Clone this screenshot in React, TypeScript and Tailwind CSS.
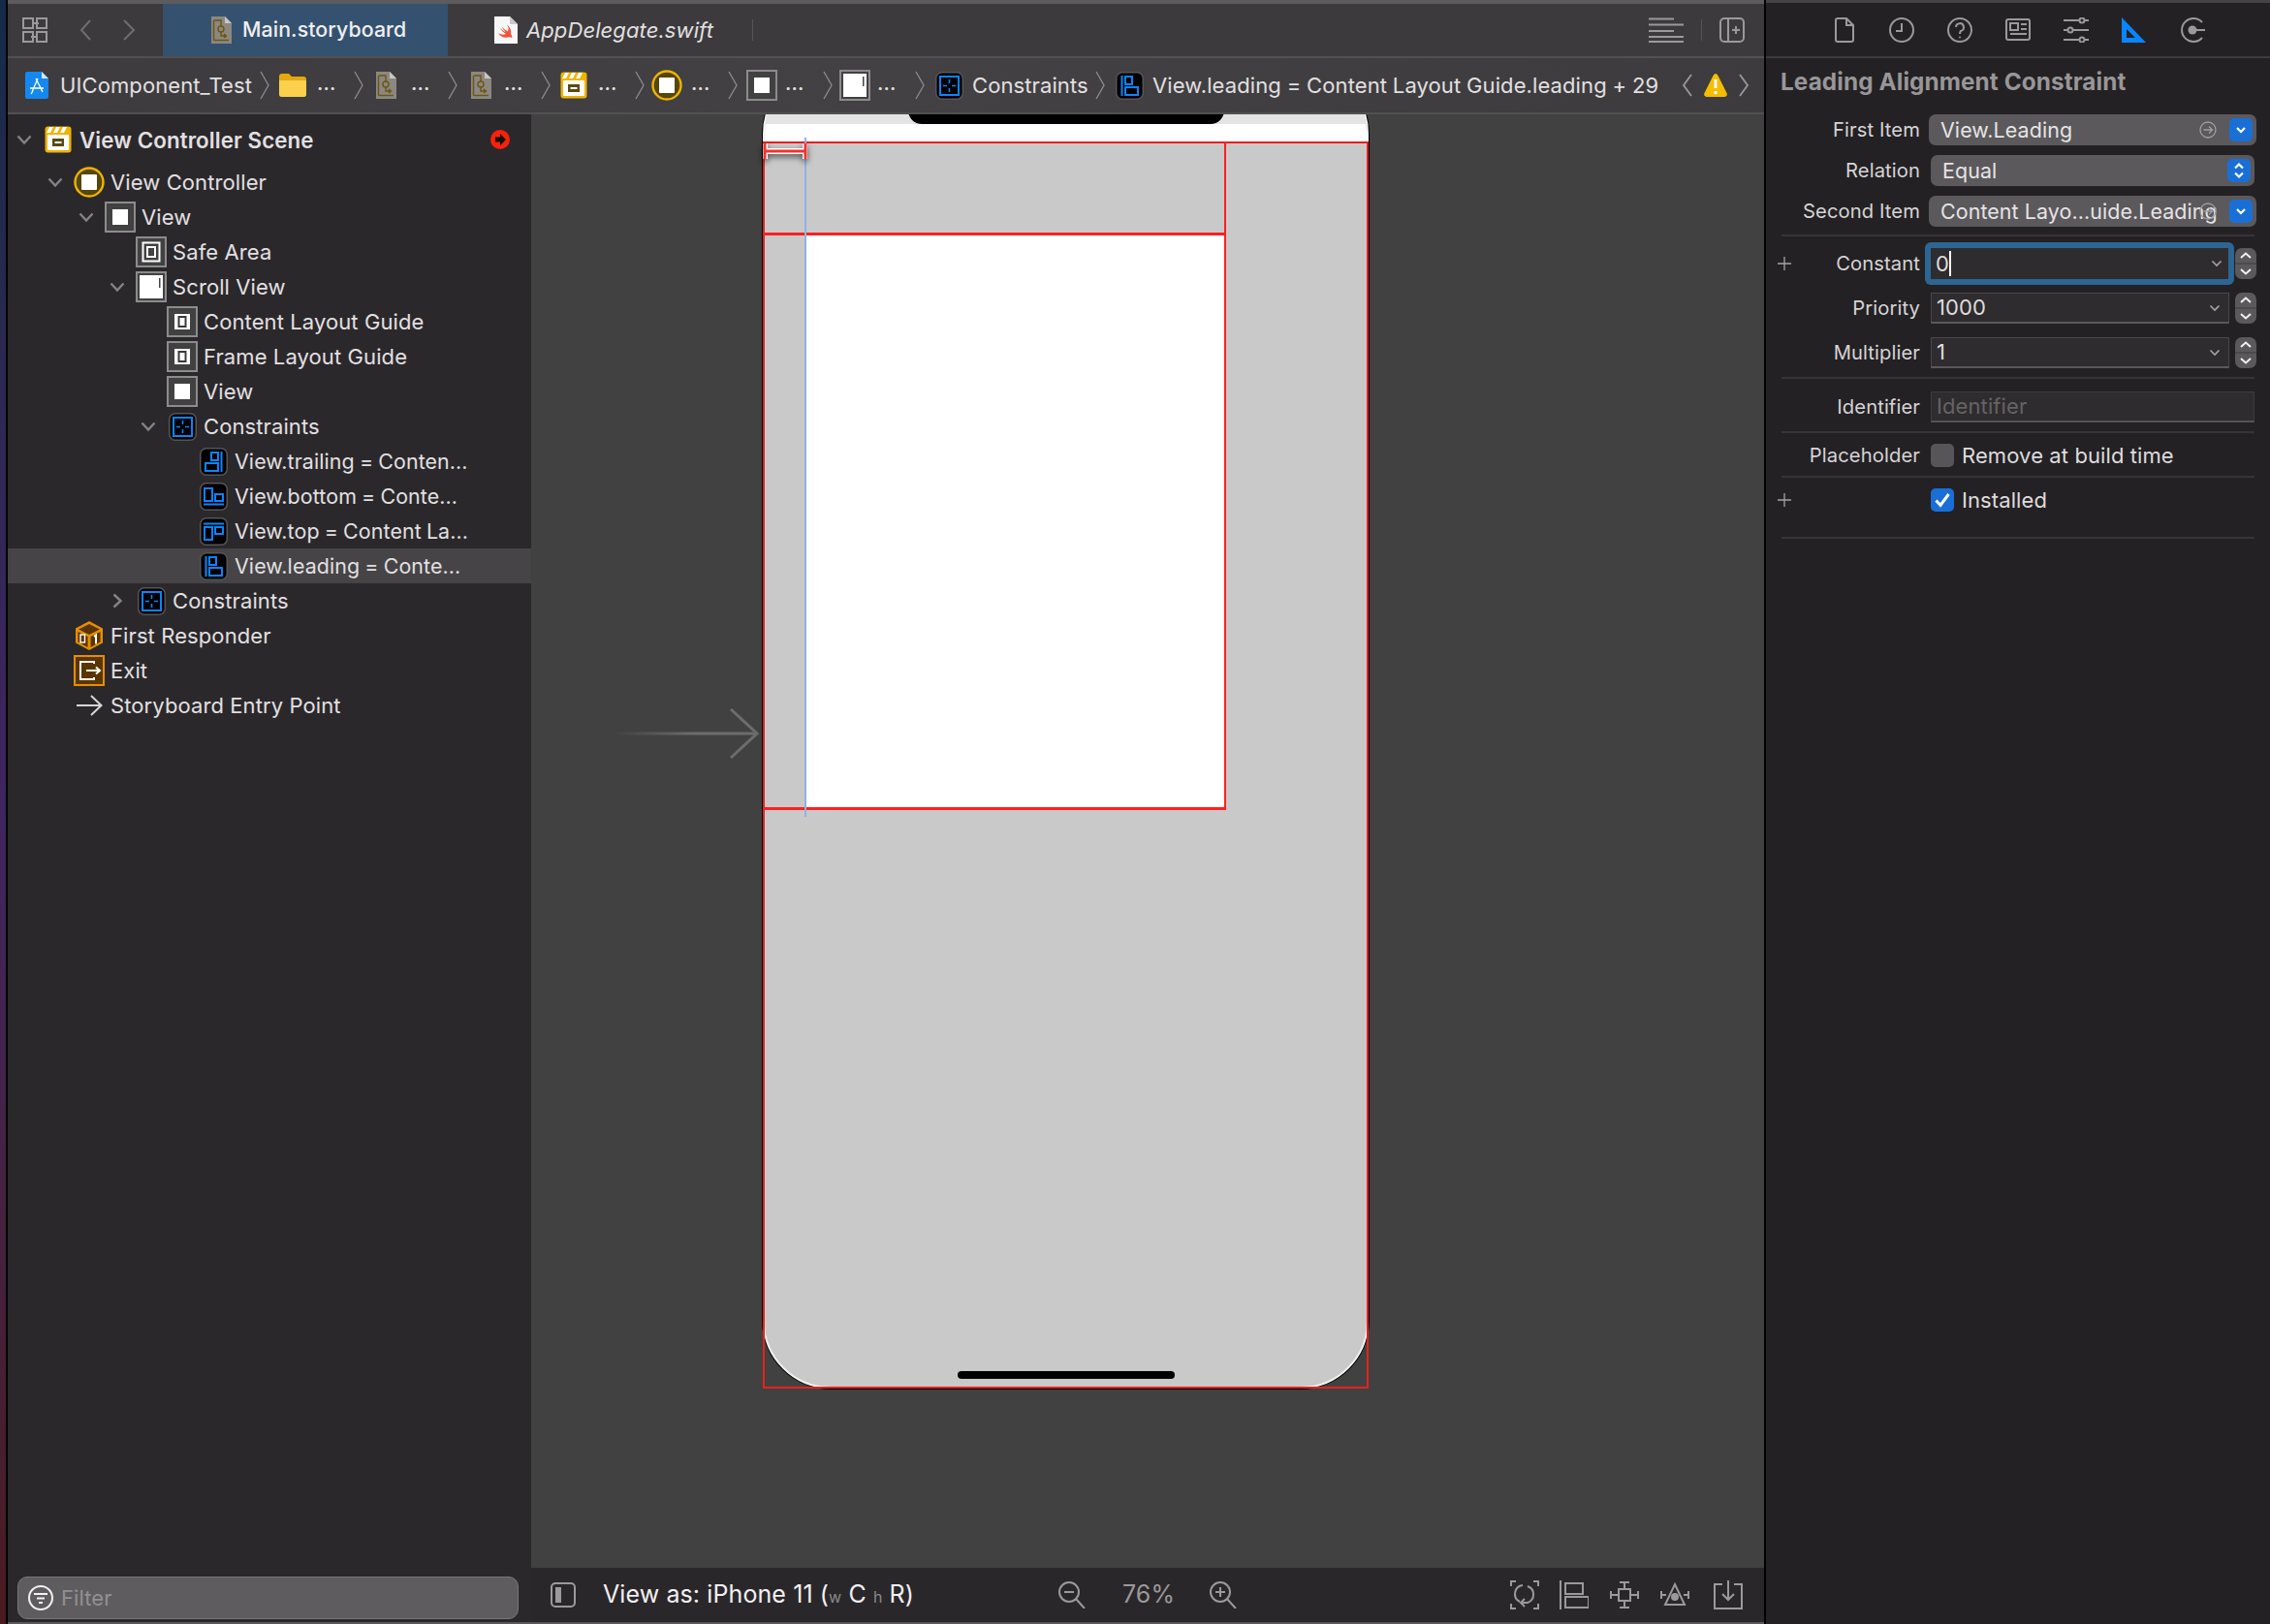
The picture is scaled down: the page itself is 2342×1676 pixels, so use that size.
import React from "react";

const Chev = ({ open = true }: { open?: boolean }) => (
  <svg width="16" height="16" viewBox="0 0 16 16" fill="none" stroke="#858385" strokeWidth="2.4">
    {open ? <path d="M1.5 4.5 L8 11.5 L14.5 4.5" /> : <path d="M4.5 1.5 L11.5 8 L4.5 14.5" />}
  </svg>
);

const Sep = () => (
  <svg width="10" height="30" viewBox="0 0 10 30" fill="none" stroke="#8e8c8e" strokeWidth="1.3" className="shrink-0">
    <path d="M1 1 L9 15 L1 29" />
  </svg>
);

const Scene = ({ s = 28 }: { s?: number }) => (
  <svg width={s} height={s} viewBox="0 0 28 28">
    <rect x="0.5" y="0.5" width="27" height="27" rx="3" fill="#f0b400" />
    <path d="M5 1 h4 l-3 6 h-4z M12 1 h4 l-3 6 h-4z M19 1 h4 l-3 6 h-4z" fill="#fff" />
    <rect x="3" y="9" width="22" height="16" rx="1" fill="#fff" />
    <rect x="8" y="13" width="12" height="8" fill="#5a4a10" />
    <rect x="10.5" y="16" width="7" height="2" fill="#fff" />
  </svg>
);

const VC = ({ s = 32 }: { s?: number }) => (
  <svg width={s} height={s} viewBox="0 0 32 32">
    <circle cx="16" cy="16" r="14.5" fill="#55460a" stroke="#f0b400" strokeWidth="2.4" />
    <rect x="8" y="8" width="16" height="16" rx="1" fill="#fff" />
  </svg>
);

const Box = ({ kind }: { kind: "view" | "safe" | "guide" | "scroll" }) => (
  <svg width="32" height="32" viewBox="0 0 32 32">
    <rect x="1" y="1" width="30" height="30" fill="#414141" stroke="#8c8c8c" strokeWidth="2" />
    {kind === "view" && <rect x="8" y="8" width="16" height="16" fill="#fff" />}
    {kind === "guide" && (
      <>
        <rect x="8" y="8" width="16" height="16" fill="#fff" />
        <rect x="12.5" y="11" width="7" height="10" fill="none" stroke="#3a3a3a" strokeWidth="2" />
      </>
    )}
    {kind === "safe" && (
      <>
        <rect x="7.5" y="6.5" width="17" height="19" fill="none" stroke="#fff" strokeWidth="2" />
        <rect x="12" y="11" width="8" height="10" fill="none" stroke="#fff" strokeWidth="2" />
      </>
    )}
    {kind === "scroll" && (
      <>
        <rect x="4" y="4" width="24" height="24" fill="#fff" />
        <rect x="24" y="7" width="1.5" height="10" fill="#444" />
      </>
    )}
  </svg>
);

const Cons = ({ kind, s = 29 }: { kind: "all" | "trailing" | "bottom" | "top" | "leading"; s?: number }) => (
  <svg width={s} height={s} viewBox="0 0 29 29" fill="none" stroke="#0a84ff" strokeWidth="2">
    <rect x="0.75" y="0.75" width="27.5" height="27.5" rx="6" fill="#000" stroke="#555" strokeWidth="1.5" />
    {kind === "all" && (
      <>
        <rect x="5" y="5" width="19" height="19" />
        <path d="M14.5 8v4M14.5 17v4M8 14.5h4M17 14.5h4" strokeWidth="1.6" />
      </>
    )}
    {kind === "trailing" && (
      <>
        <path d="M22.5 4v21" />
        <rect x="12" y="5" width="7" height="8" />
        <rect x="6" y="16" width="13" height="8" />
      </>
    )}
    {kind === "leading" && (
      <>
        <path d="M6.5 4v21" />
        <rect x="10" y="5" width="7" height="8" />
        <rect x="10" y="16" width="13" height="8" />
      </>
    )}
    {kind === "top" && (
      <>
        <path d="M4 6.5h21" />
        <rect x="5" y="10" width="8" height="13" />
        <rect x="16" y="10" width="8" height="7" />
      </>
    )}
    {kind === "bottom" && (
      <>
        <path d="M4 22.5h21" />
        <rect x="5" y="6" width="8" height="13" />
        <rect x="16" y="12" width="8" height="7" />
      </>
    )}
  </svg>
);

const Cube = () => (
  <svg width="30" height="32" viewBox="0 0 30 32">
    <path d="M15 1 L29 8.5 V23.5 L15 31 L1 23.5 V8.5 Z" fill="#e58f00" />
    <path d="M15 4 L26 9.5 L15 15 L4 9.5 Z" fill="#5a3500" />
    <path d="M3.5 12 L13.5 17 V28 L3.5 22.5 Z" fill="#5a3500" />
    <path d="M16.5 17 L26.5 12 V22.5 L16.5 28 Z" fill="#5a3500" />
    <rect x="6" y="15" width="4.5" height="8" fill="none" stroke="#fff" strokeWidth="1.4" />
    <path d="M20 17 l2-1.5 v9" fill="none" stroke="#fff" strokeWidth="2" />
  </svg>
);

const ExitIcon = () => (
  <svg width="32" height="32" viewBox="0 0 32 32" fill="none">
    <rect x="1" y="1" width="30" height="30" fill="#5a3500" stroke="#e58f00" strokeWidth="2" />
    <path d="M21 9 V7 H7 V25 H21 V23" stroke="#fff" strokeWidth="2" />
    <path d="M13 16 H26 M23 12.5 L27 16 L23 19.5" stroke="#fff" strokeWidth="2" />
  </svg>
);

const EntryArrow = () => (
  <svg width="28" height="24" viewBox="0 0 28 24" fill="none" stroke="#d8d6d8" strokeWidth="2">
    <path d="M1 12 H26 M16 2 L26.5 12 L16 22" />
  </svg>
);

const DocBoard = () => (
  <svg width="22" height="28" viewBox="0 0 22 28">
    <path d="M1 0 H15 L22 7 V28 H1 Z" fill="#8b8781" />
    <path d="M15 0 L22 7 H15 Z" fill="#c9c6c0" />
    <g fill="none" stroke="#6e5510" strokeWidth="1.4">
      <path d="M4 4 H11 V10" />
      <circle cx="11" cy="13" r="3" />
      <path d="M11 16 V20 H16 M14 18 L16.5 20 L14 22" />
      <path d="M3.5 24.5 H19" />
      <path d="M3.5 4 V24.5" />
    </g>
  </svg>
);

const SwiftDoc = () => (
  <svg width="24" height="28" viewBox="0 0 24 28">
    <path d="M0 0 H16 L24 8 V28 H0 Z" fill="#f7f7f7" />
    <path d="M16 0 L24 8 H16 Z" fill="#c9c9c9" />
    <path d="M13 8 C16 11 18 15 17 18 C18.5 20 18.5 21.5 18 22 C17 21 15.5 21 14 21.5 C10 22.5 6 20.5 4 17 C7 19 10 19 12 18 C9 16 7 14 5.5 11.5 C8 14 10 15.5 11.5 16 C10 14 8.5 12.5 7.5 10.5 C10 13 12.5 15 14 15.5 C15 13 14.5 10.5 13 8 Z" fill="#f05138" />
  </svg>
);

const AppDoc = () => (
  <svg width="24" height="28" viewBox="0 0 24 28">
    <path d="M0 2 Q0 0 2 0 H17 L24 7 V26 Q24 28 22 28 H2 Q0 28 0 26 Z" fill="#1488ee" />
    <path d="M17 0 L24 7 H17 Z" fill="#cfe5fb" />
    <path d="M13 7 L7 21 M11 7 L18 21 M5 17 H19 M6 23 L8 20" stroke="#fff" strokeWidth="1.3" fill="none" />
  </svg>
);

const Folder = () => (
  <svg width="28" height="24" viewBox="0 0 28 24">
    <path d="M0 3 Q0 0 3 0 H10 L13 3 H25 Q28 3 28 6 V21 Q28 24 25 24 H3 Q0 24 0 21 Z" fill="#e5a90f" />
    <path d="M0 7 H28 V21 Q28 24 25 24 H3 Q0 24 0 21 Z" fill="#fad04d" />
  </svg>
);

const Ell = () => <div className="w-[15px] shrink-0 text-[20px] leading-none -mt-[4px] text-[#dedcde] font-semibold">...</div>;

type RowData = {
  level: number;
  label: string;
  icon: React.ReactNode;
  chev?: "open" | "closed";
  selected?: boolean;
  bold?: boolean;
};

const pads = ["pl-[8px]", "pl-[40px]", "pl-[72px]", "pl-[104px]", "pl-[136px]", "pl-[168px]"];

const rows: RowData[] = [
  { level: 1, label: "View Controller", icon: <VC />, chev: "open" },
  { level: 2, label: "View", icon: <Box kind="view" />, chev: "open" },
  { level: 3, label: "Safe Area", icon: <Box kind="safe" /> },
  { level: 3, label: "Scroll View", icon: <Box kind="scroll" />, chev: "open" },
  { level: 4, label: "Content Layout Guide", icon: <Box kind="guide" /> },
  { level: 4, label: "Frame Layout Guide", icon: <Box kind="guide" /> },
  { level: 4, label: "View", icon: <Box kind="view" /> },
  { level: 4, label: "Constraints", icon: <Cons kind="all" />, chev: "open" },
  { level: 5, label: "View.trailing = Conten...", icon: <Cons kind="trailing" /> },
  { level: 5, label: "View.bottom = Conte...", icon: <Cons kind="bottom" /> },
  { level: 5, label: "View.top = Content La...", icon: <Cons kind="top" /> },
  { level: 5, label: "View.leading = Conte...", icon: <Cons kind="leading" />, selected: true },
  { level: 3, label: "Constraints", icon: <Cons kind="all" />, chev: "closed" },
  { level: 1, label: "First Responder", icon: <Cube /> },
  { level: 1, label: "Exit", icon: <ExitIcon /> },
  { level: 1, label: "Storyboard Entry Point", icon: <EntryArrow /> },
];

const TreeRow = ({ r }: { r: RowData }) => (
  <div className={`flex items-center h-[36px] ${pads[r.level]} ${r.selected ? "bg-[#464446]" : ""}`}>
    <div className="w-[28px] shrink-0 flex pl-[1px]">
      {r.chev && <Chev open={r.chev === "open"} />}
    </div>
    <div className="w-[32px] h-[32px] shrink-0 flex items-center justify-center">{r.icon}</div>
    <span className={`ml-[6px] whitespace-nowrap pt-[1px] ${r.bold ? "font-semibold text-[22.3px]" : ""} ${r.level === 5 ? "text-[21.4px] [word-spacing:-1px]" : ""}`}>{r.label}</span>
  </div>
);

const Tool = ({ children, w = 26, h = 26 }: { children: React.ReactNode; w?: number; h?: number }) => (
  <svg width={w} height={h} viewBox={`0 0 ${w} ${h}`} fill="none" stroke="#9b999b" strokeWidth="2" className="shrink-0">
    {children}
  </svg>
);

const Pop = ({ arrow = "down" }: { arrow?: "down" | "updown" }) => (
  <div className="w-[24px] h-[24px] rounded-[5px] bg-[#1a6fd6] flex items-center justify-center shrink-0">
    <svg width="14" height="18" viewBox="0 0 14 18" fill="none" stroke="#fff" strokeWidth="2.2">
      {arrow === "down" ? <path d="M3 7 L7 11 L11 7" /> : <path d="M3 6.5 L7 2.5 L11 6.5 M3 11.5 L7 15.5 L11 11.5" />}
    </svg>
  </div>
);

const GoTo = () => (
  <svg width="18" height="18" viewBox="0 0 18 18" fill="none" stroke="#a09ea0" strokeWidth="1.3" className="absolute right-[41px] top-[7px]">
    <circle cx="9" cy="9" r="8" />
    <path d="M4.5 9 H13 M10 5.5 L13.5 9 L10 12.5" />
  </svg>
);

const Stepper = () => (
  <div className="w-[22px] h-[32px] rounded-[7px] bg-[#5b595b] flex flex-col items-center justify-center shrink-0">
    <svg width="22" height="32" viewBox="0 0 22 32" fill="none" stroke="#f2f0f2" strokeWidth="2">
      <path d="M6 10 L11 5.5 L16 10 M6 22 L11 26.5 L16 22" />
      <path d="M0 16 H22" stroke="#3e3c3e" strokeWidth="1" />
    </svg>
  </div>
);

const SmallDown = () => (
  <svg width="12" height="10" viewBox="0 0 12 10" fill="none" stroke="#a5a3a5" strokeWidth="1.6" className="shrink-0">
    <path d="M1.5 2.5 L6 7 L10.5 2.5" />
  </svg>
);

const Plus = () => (
  <svg width="14" height="14" viewBox="0 0 14 14" stroke="#a5a3a5" strokeWidth="1.3" className="shrink-0">
    <path d="M7 0 V14 M0 7 H14" />
  </svg>
);

const Label = ({ children, plus }: { children?: React.ReactNode; plus?: boolean }) => (
  <div className="w-[159px] shrink-0 pl-[12px] flex items-center justify-between text-[20.2px] text-[#d6d4d6]">
    <span>{plus && <Plus />}</span>
    <span className="whitespace-nowrap pt-[1px]">{children}</span>
  </div>
);

const Divider = ({ cls }: { cls: string }) => <div className={`h-[2px] ml-[16px] mr-[16px] bg-[#363436] ${cls}`} />;

const PopField = ({ text, arrow, goto, inset }: { text: string; arrow?: "down" | "updown"; goto?: boolean; inset?: boolean }) => (
  <div className={`h-[32px] rounded-[7px] bg-[#5b595b] flex items-center relative ${inset ? "ml-[11px] w-[334px] pl-[12px] pr-[4px]" : "ml-[9px] w-[338px] pl-[12px] pr-[4px]"}`}>
    <span className="flex-1 whitespace-nowrap text-[21.4px] text-[#e6e4e6]">{text}</span>
    {goto && <GoTo />}
    <Pop arrow={arrow} />
  </div>
);

const ComboRow = ({ label, value, cls }: { label: string; value: string; cls: string }) => (
  <div className={`flex items-center h-[32px] ${cls}`}>
    <Label>{label}</Label>
    <div className="ml-[11px] w-[308px] h-[32px] bg-[#2f2c2f] border border-[#4a484a] border-b-2 border-b-[#5a585a] flex items-center pl-[5px] pr-[8px]">
      <span className="flex-1 text-[#dedcde]">{value}</span>
      <SmallDown />
    </div>
    <div className="ml-[6px]"><Stepper /></div>
  </div>
);

export default function App() {
  const font = "font-['Inter','Liberation_Sans',sans-serif]";
  return (
    <div className={`w-[2342px] h-[1676px] flex overflow-hidden bg-black text-[22px] tracking-[0.1px] text-[#e2e0e2] ${font}`}>
      <div className="w-[6px] h-full bg-gradient-to-b from-[#152a48] via-[#40245f] to-[#4a1a20] shrink-0" />
      <div className="w-[2px] h-full bg-black shrink-0" />

      {/* editor column */}
      <div className="w-[1812px] h-full flex flex-col shrink-0 bg-[#5a585a] pb-[2px]">
        <div className="h-[4px] bg-[#5d5b5d] shrink-0" />
        <div className="h-[54px] bg-[#3c3a3c] flex items-center shrink-0">
          <div className="w-[160px] flex items-center pl-[15px] shrink-0">
            <svg width="26" height="26" viewBox="0 0 26 26" fill="none" stroke="#9b999b" strokeWidth="2">
              <rect x="1" y="1" width="10" height="10" />
              <rect x="15" y="1" width="10" height="10" />
              <rect x="1" y="15" width="10" height="10" />
              <rect x="15" y="15" width="10" height="10" />
              <path d="M11 6 H17 M9 20 H15" />
            </svg>
            <svg width="12" height="22" viewBox="0 0 12 22" fill="none" stroke="#6f6d6f" strokeWidth="2" className="ml-[33px]">
              <path d="M11 1 L2 11 L11 21" />
            </svg>
            <svg width="14" height="22" viewBox="0 0 14 22" fill="none" stroke="#6f6d6f" strokeWidth="2" className="ml-[32px]">
              <path d="M2 1 L12 11 L2 21" />
            </svg>
          </div>
          <div className="w-[294px] h-full bg-[#34526f] flex items-center pl-[49px] text-[#f0eef0] shrink-0">
            <DocBoard />
            <span className="ml-[11px] text-[21.3px] font-medium">Main.storyboard</span>
          </div>
          <div className="flex items-center pl-[48px] shrink-0">
            <SwiftDoc />
            <span className="ml-[9px] italic text-[#e2e0e2]">AppDelegate.swift</span>
          </div>
          <div className="ml-[40px] w-[1px] h-[22px] bg-[#565456]" />
          <div className="flex-1" />
          <Tool w={36} h={26}>
            <path d="M0 1.5 H26 M0 7.5 H36 M0 14 H26 M0 20 H36 M0 25 H36" />
          </Tool>
          <div className="ml-[18px] w-[1px] h-[22px] bg-[#565456]" />
          <svg width="26" height="26" viewBox="0 0 26 26" fill="none" stroke="#9b999b" strokeWidth="2" className="ml-[18px] mr-[20px]">
            <rect x="1" y="1" width="24" height="24" rx="4" />
            <path d="M9 1 V25 M13 13 H21 M17 9 V17" />
          </svg>
        </div>
        <div className="h-[2px] bg-[#525052] shrink-0" />

        {/* breadcrumb */}
        <div className="h-[56px] bg-gradient-to-r from-[#3d3b3d] via-[#434143] to-[#3d3b3d] flex items-center shrink-0 whitespace-nowrap">
          <div className="ml-[18px]"><AppDoc /></div>
          <span className="ml-[12px] w-[200px] shrink-0">UIComponent_Test</span>
          <div className="ml-[6px]"><Sep /></div>
          <div className="ml-[10px]"><Folder /></div>
          <div className="ml-[11px]"><Ell /></div>
          <div className="ml-[23px]"><Sep /></div>
          <div className="ml-[12px]"><DocBoard /></div>
          <div className="ml-[15px]"><Ell /></div>
          <div className="ml-[23px]"><Sep /></div>
          <div className="ml-[13px]"><DocBoard /></div>
          <div className="ml-[13px]"><Ell /></div>
          <div className="ml-[23px]"><Sep /></div>
          <div className="ml-[10px]"><Scene /></div>
          <div className="ml-[11px]"><Ell /></div>
          <div className="ml-[23px]"><Sep /></div>
          <div className="ml-[7px]"><VC /></div>
          <div className="ml-[9px]"><Ell /></div>
          <div className="ml-[23px]"><Sep /></div>
          <div className="ml-[9px]"><Box kind="view" /></div>
          <div className="ml-[8px]"><Ell /></div>
          <div className="ml-[24px]"><Sep /></div>
          <div className="ml-[7px]"><Box kind="scroll" /></div>
          <div className="ml-[7px]"><Ell /></div>
          <div className="ml-[24px]"><Sep /></div>
          <div className="ml-[11px]"><Cons kind="all" /></div>
          <span className="ml-[9px] w-[118px] shrink-0">Constraints</span>
          <div className="ml-[9px]"><Sep /></div>
          <div className="ml-[11px]"><Cons kind="leading" /></div>
          <span className="ml-[9px] w-[522px] shrink-0 [word-spacing:-0.5px]">View.leading = Content Layout Guide.leading + 29</span>
          <svg width="12" height="26" viewBox="0 0 12 26" fill="none" stroke="#9b999b" strokeWidth="1.8" className="ml-[24px] shrink-0">
            <path d="M10 2 L2 13 L10 24" />
          </svg>
          <svg width="24" height="24" viewBox="0 0 24 24" className="ml-[11px] shrink-0">
            <path d="M12 0 C13 0 14 1 15 3 L23.5 20 C24.5 22.5 23 24 21 24 H3 C1 24 -0.5 22.5 0.5 20 L9 3 C10 1 11 0 12 0 Z" fill="#f5bd00" />
            <path d="M12 6 V15" stroke="#fff" strokeWidth="3" />
            <circle cx="12" cy="19.5" r="1.8" fill="#fff" />
          </svg>
          <svg width="12" height="26" viewBox="0 0 12 26" fill="none" stroke="#9b999b" strokeWidth="1.8" className="ml-[11px] shrink-0">
            <path d="M2 2 L10 13 L2 24" />
          </svg>
        </div>
        <div className="h-[2px] bg-[#525052] shrink-0" />

        {/* body */}
        <div className="flex flex-1 min-h-0">
          {/* navigator */}
          <div className="w-[540px] shrink-0 bg-[#2b282b] flex flex-col">
            <div className="pt-[8px]">
              <TreeRow r={{ level: 0, label: "View Controller Scene", icon: <Scene />, chev: "open", bold: true }} />
            </div>
            <div className="mt-[8px] relative">
              {rows.map((r, i) => (
                <TreeRow key={i} r={r} />
              ))}
              <svg width="20" height="20" viewBox="0 0 20 20" className="absolute left-[498px] -top-[36px]">
                <circle cx="10" cy="10" r="10" fill="#f8210c" />
                <path d="M5 7.5 H10 V4 L16 10 L10 16 V12.5 H5 Z" fill="#111" />
              </svg>
            </div>
            <div className="flex-1" />
            <div className="ml-[10px] mr-[13px] mb-[3px] h-[44px] rounded-[10px] bg-[#5f5c5f] border border-[#777577] flex items-center pl-[10px]">
              <svg width="26" height="26" viewBox="0 0 26 26" fill="none" stroke="#f2f0f2" strokeWidth="2">
                <circle cx="13" cy="13" r="12" />
                <path d="M6 9 H20 M9 13.5 H17 M11 18 H15" />
              </svg>
              <span className="ml-[8px] text-[#939093]">Filter</span>
            </div>
          </div>

          {/* canvas */}
          <div className="w-[1272px] shrink-0 flex flex-col">
            <div className="flex-1 min-h-0 bg-[#414141] relative overflow-hidden pl-[239px]">
              <div className="w-[625px] h-[1365px] -mt-[50px] relative">
                <div className="w-full h-full rounded-[70px] overflow-hidden bg-[#c9c9c9] border-2 border-[#f2f2f2] shadow-[0_0_0_1px_#000] flex flex-col">
                  <div className="h-[58px] bg-[#e4e4e4] relative shrink-0">
                    <div className="absolute left-[148px] top-0 w-[326px] h-[58px] bg-black rounded-b-[14px]" />
                  </div>
                  <div className="h-[18px] bg-white shrink-0" />
                  <div className="flex-1" />
                  <div className="h-[8px] w-[224px] bg-black rounded-full self-center mb-[8px] shrink-0" />
                </div>

                {/* red frames over the device */}
                <div className="absolute left-0 top-[78px] w-[625px] h-[1287px] border-2 border-[#e8201f]" />
                <div className="absolute left-[45px] top-[174px] w-[432px] h-[592px] bg-white" />
                <div className="absolute left-0 top-[78px] w-[478px] h-[690px] border-r-2 border-b-[3px] border-[#ff1f1f]" />
                <div className="absolute left-0 top-[172px] w-[478px] h-[3px] bg-[#ff1f1f]" />
                <div className="absolute left-[43px] top-[74px] w-[2px] h-[701px] bg-[#8fb2e6]" />
                <svg width="46" height="22" viewBox="0 0 46 22" fill="none" className="absolute left-0 top-[78px] drop-shadow-[0_3px_3px_rgba(0,0,0,0.6)]">
                  <path d="M2 2 V18 M44 2 V18 M2 10 H44" stroke="#fff" strokeWidth="6" />
                  <path d="M2 2 V18 M44 2 V18 M2 10 H44" stroke="#f53030" strokeWidth="3" />
                </svg>
              </div>

              <svg width="150" height="52" viewBox="0 0 150 52" fill="none" className="absolute left-[85px] top-[613px]">
                <defs>
                  <linearGradient id="entry" x1="0" x2="1" y1="0" y2="0">
                    <stop offset="0" stopColor="#6a6a6a" stopOpacity="0" />
                    <stop offset="0.55" stopColor="#6c6c6c" />
                  </linearGradient>
                </defs>
                <rect x="0" y="24.5" width="148" height="3" fill="url(#entry)" />
                <path d="M121 1 L148 26 L121 51" stroke="#6c6c6c" strokeWidth="3" />
              </svg>
            </div>

            {/* canvas bottom bar */}
            <div className="h-[56px] bg-[#2a272a] flex items-center shrink-0 text-[#9b999b]">
              <svg width="26" height="26" viewBox="0 0 26 26" fill="none" className="ml-[20px] shrink-0">
                <rect x="1" y="1" width="24" height="24" rx="4" stroke="#9b999b" strokeWidth="2" />
                <rect x="5" y="5" width="6" height="16" fill="#9b999b" />
              </svg>
              <span className="ml-[28px] w-[320px] shrink-0 text-[25px] text-[#f2f0f2] whitespace-nowrap -mt-[1px]">
                View as: iPhone 11 (<span className="text-[16px] text-[#8b898b]">w</span> C <span className="text-[16px] text-[#8b898b]">h</span> R)
              </span>
              <div className="ml-[150px]">
                <Tool w={28} h={28}>
                  <circle cx="11" cy="11" r="10" />
                  <path d="M6 11 H16 M18 18 L27 28" />
                </Tool>
              </div>
              <span className="ml-[38px] w-[54px] shrink-0 text-[25px] -mt-[1px]">76%</span>
              <div className="ml-[36px]">
                <Tool w={28} h={28}>
                  <circle cx="11" cy="11" r="10" />
                  <path d="M6 11 H16 M11 6 V16 M18 18 L27 28" />
                </Tool>
              </div>
              <div className="ml-[282px]">
                <Tool w={30} h={30}>
                  <path d="M1 6 V1 H6 M24 1 H29 V6 M1 24 V29 H6 M24 29 H29 V24" />
                  <path d="M18 6 A9 9 0 0 1 18 23 H12 M15 19 L11 23 L15 27 M10 22 A9 9 0 0 1 13 5" />
                </Tool>
              </div>
              <div className="ml-[21px]">
                <Tool w={30} h={30}>
                  <path d="M1 0 V30" />
                  <rect x="6" y="3" width="18" height="11" />
                  <rect x="6" y="17" width="24" height="11" />
                </Tool>
              </div>
              <div className="ml-[22px]">
                <Tool w={30} h={30}>
                  <rect x="9" y="9" width="12" height="12" />
                  <path d="M15 3 V9 M15 21 V27 M10 2 H20 M10 28 H20 M1 11 V19 M29 11 V19 M1 15 H9 M21 15 H29" />
                </Tool>
              </div>
              <div className="ml-[22px]">
                <Tool w={30} h={30}>
                  <path d="M15 4 L25 25 H5 Z" />
                  <circle cx="15" cy="17" r="3" fill="#9b999b" />
                  <path d="M1 11 V19 M29 11 V19 M1 15 H6 M24 15 H29" />
                </Tool>
              </div>
              <div className="ml-[25px]">
                <Tool w={30} h={30}>
                  <path d="M9 4 H1 V29 H29 V4 H21 M15 0 V20 M9 14 L15 20 L21 14" />
                </Tool>
              </div>
            </div>
          </div>
        </div>
      </div>

      <div className="w-[2px] h-full bg-black shrink-0" />

      {/* inspector */}
      <div className="flex-1 h-full flex flex-col bg-[#232123]">
        <div className="h-[3px] bg-[#454345] shrink-0" />
        <div className="h-[55px] flex items-center shrink-0 pl-[71px] gap-[34px]">
          <Tool w={20} h={26}>
            <path d="M1 3 Q1 1 3 1 H12 L19 8 V23 Q19 25 17 25 H3 Q1 25 1 23 Z M12 1 V8 H19" />
          </Tool>
          <div className="ml-[2px]">
            <Tool>
              <circle cx="13" cy="13" r="12" />
              <path d="M13 6 V14 H7" />
            </Tool>
          </div>
          <Tool>
            <circle cx="13" cy="13" r="12" />
            <path d="M9 10 A4 4 0 1 1 14 14 Q13 15 13 17" />
            <circle cx="13" cy="20.5" r="1" fill="#9b999b" stroke="none" />
          </Tool>
          <Tool>
            <rect x="1" y="2" width="24" height="21" rx="2" />
            <rect x="5" y="6" width="8" height="7" />
            <path d="M16 7 H22 M16 12 H22 M5 17 H22" />
          </Tool>
          <Tool>
            <path d="M0 3 H26 M0 13 H26 M0 23 H26" />
            <circle cx="19" cy="3" r="2.5" fill="#232123" />
            <circle cx="7" cy="13" r="2.5" fill="#232123" />
            <circle cx="19" cy="23" r="2.5" fill="#232123" />
          </Tool>
          <svg width="25" height="26" viewBox="0 0 25 26" className="shrink-0">
            <path fillRule="evenodd" d="M0 0 L25 26 H0 Z M5 12 V21 H14 Z" fill="#0a84ff" />
          </svg>
          <div className="ml-[1px]">
            <Tool>
              <path d="M23 5 A12 12 0 1 0 23 21" />
              <circle cx="13" cy="13" r="4.5" fill="#9b999b" stroke="none" />
              <path d="M17 13 H26" />
            </Tool>
          </div>
        </div>
        <div className="h-[2px] bg-[#3c3a3c] shrink-0" />

        <div className="h-[46px] flex items-center pl-[15px] pt-[2px] font-bold text-[#989698] text-[24.3px] whitespace-nowrap shrink-0">
          Leading Alignment Constraint
        </div>

        <div className="mt-[12px] flex items-center h-[32px]">
          <Label>First Item</Label>
          <PopField text="View.Leading" goto />
        </div>
        <div className="mt-[10px] flex items-center h-[32px]">
          <Label>Relation</Label>
          <PopField text="Equal" arrow="updown" inset />
        </div>
        <div className="mt-[10px] flex items-center h-[32px]">
          <Label>Second Item</Label>
          <PopField text="Content Layo...uide.Leading" goto />
        </div>
        <Divider cls="mt-[8px]" />

        <div className="mt-[6px] flex items-center h-[44px]">
          <Label plus>Constant</Label>
          <div className="ml-[5px] w-[319px] h-[44px] rounded-[6px] bg-[#2d6595] p-[6px] shrink-0">
            <div className="w-full h-full bg-[#2f2c2f] flex items-center pl-[5px] pr-[6px]">
              <span className="text-[#dedcde]">0</span>
              <div className="w-[2px] h-[26px] bg-white" />
              <div className="flex-1" />
              <SmallDown />
            </div>
          </div>
          <div className="ml-[1px]"><Stepper /></div>
        </div>

        <ComboRow label="Priority" value="1000" cls="mt-[8px]" />
        <ComboRow label="Multiplier" value="1" cls="mt-[14px]" />
        <Divider cls="mt-[9px]" />

        <div className="mt-[13px] flex items-center h-[32px]">
          <Label>Identifier</Label>
          <div className="ml-[11px] w-[334px] h-[32px] bg-[#2f2c2f] border border-[#3e3c3e] border-b-2 border-b-[#555355] flex items-center pl-[5px] text-[#656365]">
            Identifier
          </div>
        </div>
        <Divider cls="mt-[9px]" />

        <div className="mt-[11px] flex items-center h-[24px]">
          <Label>Placeholder</Label>
          <div className="ml-[11px] w-[24px] h-[24px] rounded-[5px] bg-[#575557] shrink-0" />
          <span className="ml-[8px] text-[#dedcde] whitespace-nowrap">Remove at build time</span>
        </div>
        <Divider cls="mt-[9px]" />

        <div className="mt-[11px] flex items-center h-[24px]">
          <Label plus />
          <div className="ml-[11px] w-[24px] h-[24px] rounded-[5px] bg-[#1a6fd6] flex items-center justify-center shrink-0">
            <svg width="18" height="18" viewBox="0 0 18 18" fill="none" stroke="#fff" strokeWidth="3">
              <path d="M2.5 9.5 L7 14.5 L15.5 3" />
            </svg>
          </div>
          <span className="ml-[8px] text-[#dedcde] whitespace-nowrap">Installed</span>
        </div>
        <Divider cls="mt-[26px]" />
      </div>
    </div>
  );
}
